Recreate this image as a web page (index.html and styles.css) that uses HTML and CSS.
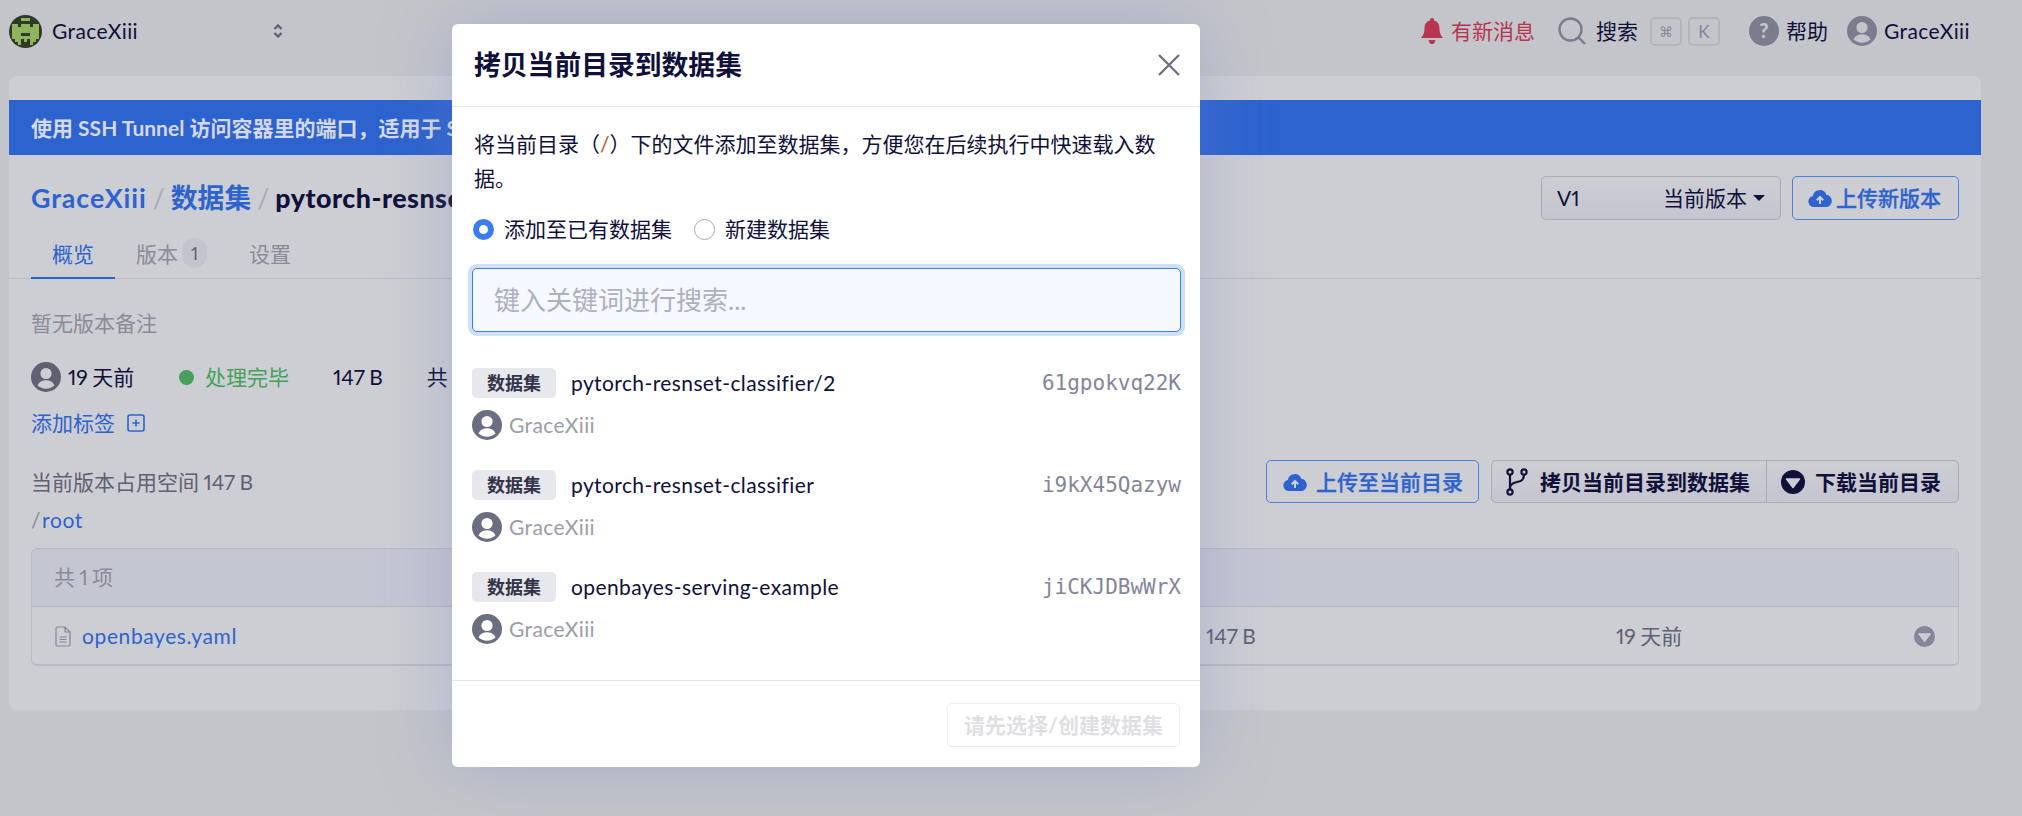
FILE: index.html
```html
<!DOCTYPE html>
<html>
<head lang="zh">
  <meta charset="UTF-8">
  <title>拷贝当前目录到数据集</title>
  <link rel="stylesheet" href="styles.css">
</head>
<body>
  <svg class="sprites" width="0" height="0">
    <symbol id="user" viewBox="0 0 30 30">
      <circle cx="15" cy="15" r="15"/>
      <circle cx="15" cy="11.5" r="5.6" fill="var(--hole)"/>
      <path d="M6.5 23.5c1.500-3.600 4.800-5.200 8.500-5.200s7 1.600 8.500 5.200c-2.200 2-5.200 3.200-8.500 3.200s-6.300-1.200-8.500-3.200z" fill="var(--hole)"/>
    </symbol>
    <symbol id="cloud" viewBox="0 0 24 18">
      <path d="M6 18a5.500 5.500 0 0 1-1.200-10.900A7 7 0 0 1 18.300 5.700 6.200 6.200 0 0 1 18.500 18z"/>
      <path d="M12 15V8.500M8.800 11.300 12 8l3.200 3.300" fill="none" stroke="var(--hole)" stroke-width="2"/>
    </symbol>
    <symbol id="down" viewBox="0 0 24 24">
      <circle cx="12" cy="12" r="12"/>
      <path d="M5.500 9h13L12 17.500z" fill="var(--hole)" stroke="var(--hole)" stroke-width="1.500" stroke-linejoin="round"/>
    </symbol>
  </svg>

  <div class="topbar">
    <div class="team">
      <svg class="identicon" viewBox="0 0 11 11" shape-rendering="crispEdges">
        <clipPath id="round"><circle cx="5.500" cy="5.500" r="5.500"/></clipPath>
        <g clip-path="url(#round)">
          <rect width="11" height="11" fill="#2f3a26"/>
          <path fill="#8db35c" d="M4 1h3v1H4zM1 3h2v1H1zM8 3h2v1H8zM4 3h3v1H4zM1 4h9v2H1zM1 6h3v1H1zM7 6h3v1H7zM1 7h9v1H1zM2 8h2v1H2zM7 8h2v1H7zM5 8h1v1H5zM3 9h1v1H3zM7 9h1v1H7z"/>
        </g>
      </svg>
      <span class="team-name">GraceXiii</span>
      <svg class="updown" viewBox="0 0 12 16"><path d="M2.500 6 6 2.500 9.500 6M2.500 10 6 13.500 9.500 10"/></svg>
    </div>
    <div class="top-right">
      <span class="notice">
        <svg class="bell" viewBox="0 0 22 26"><path d="M11 0c1.200 0 2 .9 2 2v.6c3.600.9 5.500 3.900 5.500 7.800 0 4.400 1 6.600 3.500 9.600H0c2.500-3 3.500-5.200 3.500-9.600C3.500 6.500 5.400 3.500 9 2.600V2c0-1.100.8-2 2-2zM7.500 22h7c-.4 2.400-1.800 4-3.500 4s-3.100-1.600-3.500-4z"/></svg>
        有新消息
      </span>
      <span class="search">
        <svg class="glass" viewBox="0 0 28 28"><circle cx="12.500" cy="12.500" r="11"/><path d="M20.500 20.500 27 27"/></svg>
        搜索
        <kbd class="key key-first">⌘</kbd><kbd class="key">K</kbd>
      </span>
      <span class="help">
        <svg class="help-icon" viewBox="0 0 30 30"><circle cx="15" cy="15" r="15"/><text x="15" y="21.500" text-anchor="middle">?</text></svg>
        帮助
      </span>
      <span class="me">
        <svg class="avatar avatar-top"><use href="#user"/></svg>
        <span class="latin">GraceXiii</span>
      </span>
    </div>
  </div>

  <div class="card">
    <div class="banner">使用 SSH Tunnel 访问容器里的端口，适用于 S</div>
    <div class="head">
      <div class="crumbs">
        <a class="crumb-link latin">GraceXiii</a><span class="sep">/</span><a class="crumb-link">数据集</a><span class="sep">/</span><b class="crumb-now">pytorch-resnse</b>
      </div>
      <div class="head-btns">
        <div class="version"><span>V1</span><span class="version-now">当前版本<i class="caret"></i></span></div>
        <div class="btn-blue btn-new"><svg class="cloud"><use href="#cloud"/></svg>上传新版本</div>
      </div>
    </div>
    <ul class="tabs">
      <li class="tab tab-on">概览</li>
      <li class="tab tab-ver">版本<span class="count">1</span></li>
      <li class="tab tab-set">设置</li>
    </ul>
    <p class="note">暂无版本备注</p>
    <div class="meta">
      <svg class="avatar avatar-meta"><use href="#user"/></svg>
      <span class="meta-time">19 天前</span>
      <i class="dot"></i>
      <span class="done">处理完毕</span>
      <span class="meta-size">147 B</span>
      <span class="meta-total">共 1</span>
    </div>
    <div class="add-tag">添加标签
      <svg class="plus" viewBox="0 0 18 18"><rect x="1" y="1" width="16" height="16" rx="2"/><path d="M9 5.500v7M5.500 9h7"/></svg>
    </div>
    <div class="files-head">
      <div>
        <div class="used">当前版本占用空间 147 B</div>
        <div class="path"><span class="slash">/</span>root</div>
      </div>
      <div class="file-btns">
        <div class="btn-blue btn-up"><svg class="cloud"><use href="#cloud"/></svg>上传至当前目录</div>
        <div class="group">
          <div class="group-btn group-copy">
            <svg class="branch" viewBox="0 0 22 28"><circle cx="4" cy="4" r="2.600"/><circle cx="18" cy="4" r="2.600"/><circle cx="4" cy="24" r="2.600"/><path d="M4 6.600v14.800M18 6.600c0 5.400-2.500 6.400-7 7.400-4 .9-7 2-7 6"/></svg>
            拷贝当前目录到数据集
          </div>
          <div class="group-btn group-down"><svg class="down-dark"><use href="#down"/></svg>下载当前目录</div>
        </div>
      </div>
    </div>
    <div class="table">
      <div class="table-head">共 1 项</div>
      <div class="table-row">
        <svg class="file" viewBox="0 0 16 21"><path d="M1 2.500C1 1.600 1.600 1 2.500 1H10l5 5v12.500c0 .9-.6 1.500-1.500 1.500h-11C1.600 20 1 19.400 1 18.500zM10 1v5h5M4.500 11h7M4.500 13.500h7M4.500 16h7"/></svg>
        <a class="file-name">openbayes.yaml</a>
        <span class="file-size">147 B</span>
        <span class="file-time">19 天前</span>
        <svg class="down-grey"><use href="#down"/></svg>
      </div>
    </div>
  </div>

  <div class="overlay">
    <div class="modal">
      <div class="modal-head">
        <h2 class="modal-title">拷贝当前目录到数据集</h2>
        <svg class="close" viewBox="0 0 22 22"><path d="M1 1l20 20M21 1 1 21"/></svg>
      </div>
      <div class="modal-body">
        <p class="desc">将当前目录（<span class="desc-path">/</span>）下的文件添加至数据集，方便您在后续执行中快速载入数据。</p>
        <div class="radios">
          <i class="radio radio-on"></i><span class="radio-label">添加至已有数据集</span>
          <i class="radio"></i><span class="radio-label">新建数据集</span>
        </div>
        <input class="keyword" placeholder="键入关键词进行搜索...">
        <div class="item">
          <div class="item-top"><span class="tag">数据集</span><span class="item-name">pytorch-resnset-classifier/2</span><code class="item-id">61gpokvq22K</code></div>
          <div class="item-user"><svg class="avatar avatar-item"><use href="#user"/></svg><span class="latin">GraceXiii</span></div>
        </div>
        <div class="item">
          <div class="item-top"><span class="tag">数据集</span><span class="item-name">pytorch-resnset-classifier</span><code class="item-id">i9kX45Qazyw</code></div>
          <div class="item-user"><svg class="avatar avatar-item"><use href="#user"/></svg><span class="latin">GraceXiii</span></div>
        </div>
        <div class="item">
          <div class="item-top"><span class="tag">数据集</span><span class="item-name">openbayes-serving-example</span><code class="item-id">jiCKJDBwWrX</code></div>
          <div class="item-user"><svg class="avatar avatar-item"><use href="#user"/></svg><span class="latin">GraceXiii</span></div>
        </div>
      </div>
      <div class="modal-foot"><div class="submit">请先选择/创建数据集</div></div>
    </div>
  </div>
</body>
</html>
```

FILE: styles.css
```css
* {
  margin: 0;
  padding: 0;
  box-sizing: border-box;
}
html, body {
  width: 2022px;
  height: 816px;
  overflow: hidden;
}
body {
  position: relative;
  background: #c4c5ca;
  color: #10103a;
  font-family: "Lato", "Noto Sans CJK SC", sans-serif;
  font-size: 21px;
  line-height: 30px;
  word-spacing: -1px;
  font-variant-numeric: proportional-nums;
}
ul { list-style: none; }
i { display: block; }
.sprites { position: absolute; }
.latin { letter-spacing: .4px; }

/* top bar */
.topbar {
  height: 76px;
  display: flex;
  justify-content: space-between;
  padding: 15px 52px 0 9px;
}
.team {
  display: flex;
  align-items: flex-start;
  height: 33px;
}
.identicon { width: 33px; height: 33px; }
.team-name { margin-left: 10px; line-height: 32px; letter-spacing: .4px; }
.updown {
  width: 12px;
  height: 18px;
  margin: 7px 0 0 134px;
  fill: none;
  stroke: #5f6072;
  stroke-width: 2.400;
}
.top-right {
  display: flex;
  align-items: center;
  height: 32px;
}
.top-right span { display: flex; align-items: center; }
.notice { color: #b8354f; }
.bell { width: 22px; height: 26px; margin-right: 8px; fill: #b8354f; }
.search { margin-left: 23px; }
.glass {
  width: 28px;
  height: 28px;
  margin-right: 10px;
  fill: none;
  stroke: #7b7c8e;
  stroke-width: 2.400;
}
.key {
  width: 32px;
  height: 29px;
  margin-left: 6px;
  border: 2px solid #b3b4bd;
  border-radius: 5px;
  color: #85869a;
  font: 17px/25px "Lato", "DejaVu Sans", sans-serif;
  text-align: center;
}
.key-first { margin-left: 12px; font-size: 14px; }
.help { margin-left: 29px; }
.help-icon { width: 30px; height: 30px; margin-right: 7px; fill: #7b7c8e; }
.help-icon text { fill: #c4c5ca; font-size: 20px; font-weight: 900; }
.me { margin-left: 19px; }
.avatar { width: 30px; height: 30px; }
.avatar-top { margin-right: 7px; fill: #7b7c8e; --hole: #c4c5ca; }

/* page card */
.card {
  width: 1972px;
  height: 634px;
  margin-left: 9px;
  padding-top: 24px;
  border-radius: 8px;
  background: #cdced3;
}
.banner {
  height: 55px;
  padding-left: 22px;
  background: #2d63cf;
  color: #d5d8e6;
  font-weight: 700;
  line-height: 55px;
  white-space: nowrap;
  word-spacing: 0;
}
.head {
  display: flex;
  justify-content: space-between;
  height: 79px;
  padding: 21px 22px 0;
}
.crumbs {
  white-space: nowrap;
  font-size: 26.800px;
  line-height: 44px;
  font-weight: 700;
}
.crumbs .latin { letter-spacing: .9px; }
.crumb-link { color: #2d63cf; }
.sep { margin: 0 6px; color: #a9aab4; font-weight: 400; }
.crumb-now { color: #10103a; letter-spacing: .5px; }
.head-btns { display: flex; gap: 11px; height: 44px; }
.version {
  width: 240px;
  display: flex;
  justify-content: space-between;
  align-items: center;
  padding: 0 15px;
  border: 1px solid #a9aab6;
  border-radius: 5px;
  background: linear-gradient(#cdced4, #c4c5cf);
}
.version-now { display: flex; align-items: center; }
.caret {
  margin-left: 6px;
  border: 6px solid transparent;
  border-top-color: #10103a;
  border-bottom: 0;
}
.btn-blue {
  display: flex;
  align-items: center;
  border: 1px solid #4f7fdc;
  border-radius: 5px;
  color: #2d63cf;
  font-weight: 500;
  -webkit-text-stroke: .3px #2d63cf;
}
.btn-new { width: 167px; padding-left: 15px; }
.btn-up { width: 213px; height: 43px; padding-left: 16px; }
.cloud { width: 24px; height: 18px; margin-right: 4px; fill: #2d63cf; --hole: #cdced3; }
.btn-up .cloud { margin-right: 9px; }
.tabs {
  display: flex;
  height: 45px;
  padding-left: 22px;
  border-bottom: 1px solid #b8b9c2;
  color: #8a8b97;
}
.tab { padding: 0 21px; line-height: 40px; height: 45px; display: flex; }
.tab-on {
  width: 84px;
  color: #2d63cf;
  border-bottom: 2px solid #2d63cf;
}
.tab-ver { padding-right: 0; }
.count {
  width: 25px;
  height: 30px;
  margin: 4px 0 0 4px;
  border-radius: 15px;
  background: #c3c4cd;
  color: #5f6072;
  font-size: 18px;
  line-height: 30px;
  text-align: center;
}
.tab-set { margin-left: 21px; }
.note { margin: 29px 0 0 22px; color: #8a8b97; }
.meta {
  display: flex;
  align-items: center;
  margin: 24px 0 0 22px;
  height: 30px;
}
.avatar-meta { margin-right: 7px; fill: #5f6072; --hole: #cdced3; }
.meta-time { width: 111px; }
.dot { width: 15px; height: 15px; border-radius: 50%; background: #46a05b; }
.done { margin-left: 11px; color: #46a05b; }
.meta-size { margin-left: 44px; }
.meta-total { margin-left: 44px; white-space: nowrap; }
.add-tag {
  display: flex;
  align-items: center;
  margin: 16px 0 0 22px;
  color: #2d63cf;
}
.plus {
  width: 18px;
  height: 18px;
  margin-left: 12px;
  fill: none;
  stroke: #2d63cf;
  stroke-width: 1.600;
}
.files-head {
  display: flex;
  justify-content: space-between;
  margin: 22px 22px 0;
  height: 88px;
}
.used { margin-top: 7px; color: #5f6072; }
.path { margin-top: 8px; color: #2d63cf; letter-spacing: .6px; }
.slash { color: #8a8b97; margin-right: 1px; }
.file-btns { display: flex; gap: 12px; margin-top: 0; }
.group {
  display: flex;
  height: 43px;
  border: 1px solid #a9aab6;
  border-radius: 5px;
  background: linear-gradient(#cdced4, #c4c5cf);
  font-weight: 700;
}
.group-btn {
  display: flex;
  align-items: center;
  padding: 0 14px;
}
.group-copy { width: 275px; border-right: 1px solid #a9aab6; }
.group-down { padding-right: 17px; }
.branch {
  width: 22px;
  height: 28px;
  margin-right: 12px;
  fill: none;
  stroke: #10103a;
  stroke-width: 2.200;
}
.down-dark { width: 24px; height: 24px; margin-right: 10px; fill: #10103a; --hole: #cdced3; }
.table {
  margin: 0 22px;
  height: 118px;
  border: 1px solid #b8b9c4;
  border-bottom-width: 2px;
  border-radius: 6px;
  overflow: hidden;
}
.table-head {
  height: 58px;
  padding-left: 22px;
  background: #c4c6d2;
  border-bottom: 1px solid #b5b6c2;
  color: #8a8b97;
  line-height: 55px;
}
.table-row {
  position: relative;
  display: flex;
  align-items: center;
  height: 58px;
  padding: 0 23px;
  color: #5f6072;
}
.file {
  width: 16px;
  height: 21px;
  fill: none;
  stroke: #85869a;
  stroke-width: 1.200;
}
.file-name { width: 1124px; margin-left: 11px; color: #2d63cf; letter-spacing: .6px; }
.file-size { width: 410px; }
.file-time { width: 298px; }
.down-grey { width: 21px; height: 21px; fill: #85869a; --hole: #cdced3; }

/* dialog */
.overlay {
  position: absolute;
  left: 452px;
  top: 24px;
}
.modal {
  width: 748px;
  height: 743px;
  border-radius: 6px;
  background: #fff;
  box-shadow: 0 0 70px rgba(115, 125, 190, .34);
}
.modal-head {
  display: flex;
  justify-content: space-between;
  align-items: center;
  height: 83px;
  padding: 0 20px 1px 22px;
  border-bottom: 1px solid #e4e4e8;
}
.modal-title { font-size: 26.800px; font-weight: 700; }
.close {
  width: 22px;
  height: 22px;
  fill: none;
  stroke: #6b6d80;
  stroke-width: 2.200;
}
.modal-body { height: 573px; padding: 20px 19px 0 20px; }
.desc { line-height: 34px; padding: 0 10px 0 2px; }
.desc-path { color: #b9562a; }
.radios {
  display: flex;
  align-items: center;
  margin-top: 17px;
  height: 34px;
  padding-left: 1px;
}
.radio {
  width: 21px;
  height: 21px;
  border: 1px solid #a9aab6;
  border-radius: 50%;
}
.radio-on { border: 6px solid #3b7cf0; }
.radio-label { margin: 0 22px 0 10px; }
.keyword {
  display: block;
  width: 709px;
  height: 64px;
  margin-top: 22px;
  padding: 0 21px;
  border: 1px solid #3b7cf0;
  border-radius: 5px;
  outline: 0;
  box-shadow: 0 0 0 4px #cfe0fb;
  background: #f5f8ff;
  font-family: "Lato", "Noto Sans CJK SC", sans-serif;
  font-size: 26px;
}
.keyword::placeholder { color: #aeb0bc; }
.item { margin-top: 36px; height: 66px; }
.item + .item { margin-top: 36px; }
.item-top { display: flex; align-items: center; height: 30px; }
.tag {
  width: 84px;
  height: 30px;
  border-radius: 5px;
  background: #e7e8ec;
  color: #33344a;
  font-size: 18px;
  font-weight: 700;
  line-height: 30px;
  text-align: center;
}
.item-name { margin-left: 15px; flex: 1; letter-spacing: .4px; }
.item-id {
  color: #84859a;
  font-family: "DejaVu Sans Mono", monospace;
  font-size: 21px;
}
.item-user {
  display: flex;
  align-items: center;
  margin-top: 12px;
  color: #9b9caa;
}
.avatar-item { margin-right: 7px; fill: #6b6d80; --hole: #fff; }
.modal-foot {
  display: flex;
  justify-content: flex-end;
  height: 86px;
  padding: 22px 20px 0 0;
  border-top: 1px solid #e4e4e8;
}
.submit {
  width: 233px;
  height: 44px;
  border: 1px solid #ededf0;
  border-radius: 5px;
  color: #dfdfe3;
  font-weight: 700;
  line-height: 42px;
  text-align: center;
}
```
